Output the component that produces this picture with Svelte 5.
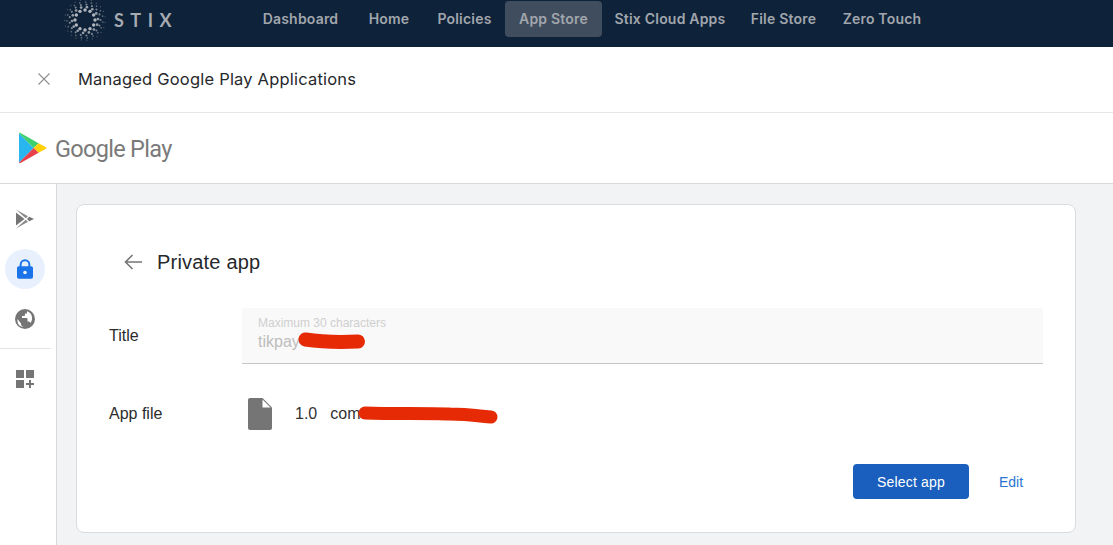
<script>
	const navItems = [
		{ label: "Dashboard", width: 107 },
		{ label: "Home", width: 70 },
		{ label: "Policies", width: 81 },
		{ label: "App Store", width: 97 },
		{ label: "Stix Cloud Apps", width: 136 },
		{ label: "File Store", width: 91 },
		{ label: "Zero Touch", width: 106 }
	];
	const activeNav = "App Store";

	// rings of the sunburst logo, big dots inside and fading out to the edge
	const rings = [
		{ r: 10, n: 12, size: 1.7, alpha: 0.9 },
		{ r: 13, n: 14, size: 1.35, alpha: 0.75 },
		{ r: 15.5, n: 17, size: 1.05, alpha: 0.6 },
		{ r: 18, n: 19, size: 0.85, alpha: 0.45 },
		{ r: 20.3, n: 23, size: 0.65, alpha: 0.35 }
	];
	const dots = rings.flatMap((ring, i) =>
		Array.from({ length: ring.n }, (_, k) => {
			const a = (k / ring.n) * Math.PI * 2 + i * 0.37;
			return {
				x: 21 + ring.r * Math.cos(a),
				y: 21 + ring.r * Math.sin(a),
				size: ring.size,
				alpha: ring.alpha
			};
		})
	);
</script>

<div class="page">
	<header class="topbar">
		<div class="brand">
			<svg width="42" height="42" viewBox="0 0 42 42" aria-hidden="true">
				{#each dots as d}
					<circle cx={d.x} cy={d.y} r={d.size} fill="#c4c8cc" opacity={d.alpha} />
				{/each}
			</svg>
			<span class="wordmark">STIX</span>
		</div>
		<nav>
			{#each navItems as item}
				<span class="nav-item" class:active={item.label === activeNav} style="width: {item.width}px">{item.label}</span>
			{/each}
		</nav>
	</header>

	<div class="titlebar">
		<svg class="close" width="12" height="12" viewBox="0 0 12 12" aria-hidden="true">
			<path d="M.5.5l11 11M11.5.5l-11 11" stroke="#8f8f8f" stroke-width="1.1" fill="none" />
		</svg>
		<span>Managed Google Play Applications</span>
	</div>

	<div class="playbar">
		<svg width="30" height="32" viewBox="0 0 30 32" aria-hidden="true">
			<path d="M1 1.2v29.6L15.6 16z" fill="#29b6f0" />
			<path d="M1 1.2c.5-.5 1.2-.4 2 0l17.6 10-5 4.800z" fill="#3ecf6e" />
			<path d="M20.600 11.200l7.400 4.100c.6.4.6 1 0 1.400l-7.400 4.100-5-4.800z" fill="#fdd00a" />
			<path d="M1 30.800c.5.5 1.200.4 2 0l17.600-10-5-4.800z" fill="#e8404a" />
		</svg>
		<span class="play-word">Google Play</span>
	</div>

	<div class="body">
		<aside>
			<div class="side-btn">
				<svg width="20" height="20" viewBox="0 0 20 20" aria-hidden="true">
					<path d="M1 3.500L9.500 10 1 16.500z" fill="#757575" />
					<path d="M1 .5L13 7.200 10.700 9.300zM1 19.500L13 12.800 10.700 10.700z" fill="#8a8a8a" />
					<path d="M14.200 7.800L19 10l-4.800 2.200L12 10z" fill="#757575" />
				</svg>
			</div>
			<div class="side-btn selected">
				<svg width="16" height="20" viewBox="0 0 18 22" aria-hidden="true">
					<path d="M3 8V6a6 6 0 0 1 12 0v2h1a2 2 0 0 1 2 2v10a2 2 0 0 1-2 2H2a2 2 0 0 1-2-2V10a2 2 0 0 1 2-2zm2.200 0h7.600V6a3.800 3.800 0 0 0-7.600 0z" fill="#1a73e8" />
					<circle cx="9" cy="15" r="2" fill="#e8f0fe" />
				</svg>
			</div>
			<div class="side-btn">
				<svg width="20" height="20" viewBox="0 0 20 20" aria-hidden="true">
					<circle cx="10" cy="10" r="10" fill="#757575" />
					<path d="M9 18c-2-.3-3.200-2-3-3.500L2.500 10c-.4 2.500.5 6 3.500 7.500zM12 2.300c2.500.7 4.500 2.500 5 5.700 .3 2-.1 4.200-1.500 6-.3-.9-1.100-1.500-2-1.500h-1v-2.500c0-.5-.4-1-1-1H7V7h2c.5 0 1-.5 1-1V4.500h2z" fill="#fff" />
				</svg>
			</div>
			<hr />
			<div class="side-btn">
				<svg width="18" height="18" viewBox="0 0 18 18" aria-hidden="true">
					<path d="M0 0h8v8H0zM10 0h8v8h-8zM0 10h8v8H0z" fill="#757575" />
					<path d="M13 10h2v3h3v2h-3v3h-2v-3h-3v-2h3z" fill="#757575" />
				</svg>
			</div>
		</aside>

		<main>
			<section class="card">
				<div class="card-head">
					<svg width="18" height="16" viewBox="0 0 18 16" aria-hidden="true">
						<path d="M18 8H1.500M8.500 1L1.500 8l7 7" stroke="#757575" stroke-width="1.600" fill="none" />
					</svg>
					<h1>Private app</h1>
				</div>

				<div class="row title-row">
					<span class="label">Title</span>
					<div class="field">
						<span class="hint">Maximum 30 characters</span>
						<span class="value">tikpay</span>
						<svg class="scribble s1" width="70" height="18" viewBox="0 0 70 18" aria-hidden="true">
							<path d="M7.500 7.500C24 10 38 10.500 60 9.500" stroke="#e62a05" stroke-width="14" stroke-linecap="round" fill="none" />
						</svg>
					</div>
				</div>

				<div class="row file-row">
					<span class="label">App file</span>
					<div class="file">
						<svg width="24" height="32" viewBox="0 0 24 32" aria-hidden="true">
							<path d="M2 0h12.500L24 9.500V30a2 2 0 0 1-2 2H2a2 2 0 0 1-2-2V2a2 2 0 0 1 2-2z" fill="#757575" />
							<path d="M14.500 1.500L22.500 9.500h-8z" fill="#fff" />
						</svg>
						<span class="version">1.0</span>
						<span class="package">com</span>
						<svg class="scribble s2" width="150" height="20" viewBox="0 0 150 20" aria-hidden="true">
							<path d="M7 7c30 1 60 0 85 1 16 0 30 2 41 3" stroke="#e62a05" stroke-width="13" stroke-linecap="round" fill="none" />
						</svg>
					</div>
				</div>

				<div class="actions">
					<button class="primary">Select app</button>
					<button class="link">Edit</button>
				</div>
			</section>
		</main>
	</div>
</div>

<style>
	:global(body) {
		margin: 0;
		overflow: hidden;
	}

	.page {
		height: 545px;
		display: flex;
		flex-direction: column;
		background: #fff;
		font-family: "Liberation Sans", Arial, sans-serif;
		overflow: hidden;
	}

	.topbar {
		height: 47px;
		flex: none;
		display: flex;
		background: #0e2239;
		box-sizing: border-box;
	}

	.brand {
		width: 247px;
		display: flex;
		align-items: center;
		padding-left: 64px;
		box-sizing: border-box;
		height: 40px;
	}

	.wordmark {
		margin-left: 8px;
		font-family: Lato, sans-serif;
		font-size: 18px;
		font-weight: 700;
		letter-spacing: 6.500px;
		color: #a6abb1;
	}

	nav {
		display: flex;
		align-items: flex-start;
		padding-top: 1px;
	}

	.nav-item {
		height: 36px;
		line-height: 35px;
		text-align: center;
		font-family: Inter, sans-serif;
		font-size: 14px;
		font-weight: 600;
		letter-spacing: 0.2px;
		color: #a1a6ad;
		border-radius: 4px;
		white-space: nowrap;
	}

	.nav-item.active {
		background: #404d5e;
	}

	.titlebar {
		height: 66px;
		flex: none;
		display: flex;
		align-items: center;
		padding: 0 0 2px 38px;
		border-bottom: 1px solid #e6e6e6;
		box-sizing: border-box;
		font-family: Inter, sans-serif;
		font-size: 16.500px;
		letter-spacing: 0.2px;
		color: #26282b;
	}

	.close {
		margin-right: 28px;
	}

	.playbar {
		height: 71px;
		flex: none;
		display: flex;
		align-items: center;
		padding-left: 18px;
		gap: 7px;
		border-bottom: 1px solid #d9d9d9;
		box-sizing: border-box;
	}

	.play-word {
		font-family: Roboto, sans-serif;
		font-size: 23.500px;
		letter-spacing: -0.7px;
		color: #7a7a7a;
		margin-top: 2px;
	}

	.body {
		flex: 1;
		display: flex;
		min-height: 0;
	}

	aside {
		width: 57px;
		flex: none;
		box-sizing: border-box;
		border-right: 1px solid #d9d9d9;
		padding: 15px 0 0 5px;
		background: #fff;
	}

	.side-btn {
		width: 40px;
		height: 40px;
		margin-bottom: 10px;
		border-radius: 50%;
		display: flex;
		align-items: center;
		justify-content: center;
	}

	.side-btn.selected {
		background: #e8f0fe;
	}

	aside hr {
		border: 0;
		border-top: 1px solid #e3e3e3;
		margin: -1px 0 10px -5px;
		width: 51px;
	}

	main {
		flex: 1;
		background: #f1f3f4;
		padding: 20px 37px 0 19px;
		min-width: 0;
	}

	.card {
		height: 329px;
		box-sizing: border-box;
		background: #fff;
		border: 1px solid #dadce0;
		border-radius: 8px;
		padding: 0 32px;
	}

	.card-head {
		display: flex;
		align-items: center;
		height: 24px;
		margin: 45px 0 34px 15px;
		gap: 15px;
	}

	h1 {
		margin: 0;
		font-size: 20px;
		font-weight: 400;
		letter-spacing: 0.2px;
		color: #26282b;
	}

	.row {
		display: flex;
		align-items: center;
	}

	.label {
		width: 133px;
		flex: none;
		font-size: 16px;
		color: #2b2b2b;
	}

	.field {
		position: relative;
		width: 801px;
		height: 56px;
		box-sizing: border-box;
		background: #f9f9f9;
		border-bottom: 1px solid #c6c6c6;
		padding: 8px 16px 0;
		display: flex;
		flex-direction: column;
	}

	.hint {
		font-size: 12px;
		line-height: 14px;
		color: #cfcfcf;
	}

	.value {
		font-size: 16px;
		line-height: 24px;
		color: #bdbdbd;
	}

	.scribble {
		position: absolute;
	}

	.s1 {
		left: 56px;
		top: 24px;
	}

	.file-row {
		margin-top: 34px;
	}

	.file {
		position: relative;
		display: flex;
		align-items: center;
		padding-left: 6px;
		height: 32px;
		font-size: 16px;
		color: #333;
	}

	.version {
		margin-left: 23px;
		margin-right: 13px;
	}

	.s2 {
		left: 116px;
		top: 8px;
	}

	.actions {
		display: flex;
		align-items: center;
		margin: 34px 4px 0 0;
		justify-content: flex-end;
		gap: 14px;
	}

	button {
		font: 14px "Liberation Sans", Arial, sans-serif;
		border: 0;
		cursor: pointer;
		padding: 0;
	}

	.primary {
		width: 116px;
		height: 35px;
		border-radius: 4px;
		background: #1a5fbd;
		color: #fff;
		letter-spacing: 0.2px;
	}

	.link {
		width: 56px;
		height: 35px;
		background: none;
		color: #2a75d0;
	}
</style>
